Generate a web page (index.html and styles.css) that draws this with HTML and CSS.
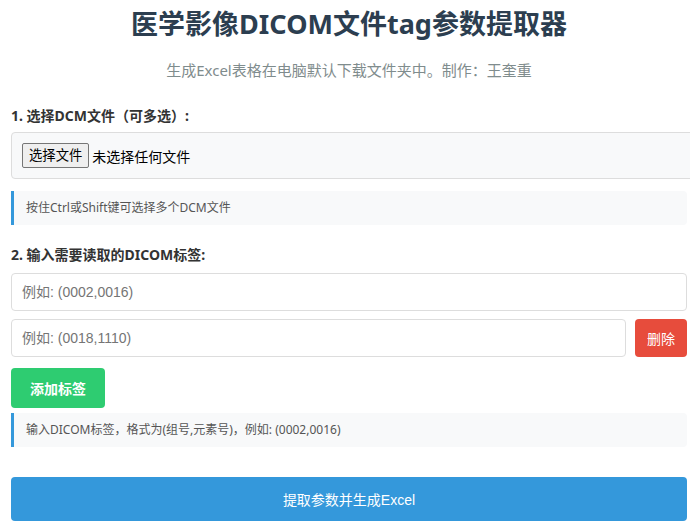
FILE: index.html
```html
<!DOCTYPE html>
<html lang="zh-CN">
  <head>
    <meta charset="utf-8">
    <title>医学影像DICOM文件tag参数提取器</title>
    <link rel="stylesheet" href="styles.css">
  </head>
  <body>
    <div class="container">
      <h1 class="title">医学影像DICOM文件tag参数提取器</h1>
      <p class="subtitle">生成Excel表格在电脑默认下载文件夹中。制作：王奎重</p>

      <div class="section first">
        <div class="label">1. 选择DCM文件（可多选）:</div>
        <label class="filebox">
          <span class="filebtn">选择文件</span>
          <span class="filename">未选择任何文件</span>
          <input type="file" multiple hidden>
        </label>
        <div class="hint">按住Ctrl或Shift键可选择多个DCM文件</div>
      </div>

      <div class="section">
        <div class="label">2. 输入需要读取的DICOM标签:</div>
        <div class="tagrow">
          <input class="taginput" placeholder="例如: (0002,0016)">
        </div>
        <div class="tagrow">
          <input class="taginput" placeholder="例如: (0018,1110)">
          <button class="delbutton">删除</button>
        </div>
        <button class="addbutton">添加标签</button>
        <div class="hint">输入DICOM标签，格式为(组号,元素号)，例如: (0002,0016)</div>
      </div>

      <button class="submitbutton">提取参数并生成Excel</button>
    </div>
  </body>
</html>
```

FILE: styles.css
```css
html {
  overflow: hidden;
}
body {
  margin: 0;
  font-family: "Noto Sans", "Noto Sans CJK SC", sans-serif;
  color: #333;
  background: #fff;
}
.container {
  width: 676px;
  margin-left: 11px;
}
.title {
  margin: 6px 0 0;
  text-align: center;
  font-size: 27px;
  font-weight: bold;
  line-height: 36px;
  color: #2c3e50;
}
.subtitle {
  margin: 18px 0 0;
  text-align: center;
  font-size: 15px;
  line-height: 20px;
  color: #7f8c8d;
}
.section {
  margin-top: 20px;
}
.section.first {
  margin-top: 26px;
}
.label {
  font-size: 14px;
  font-weight: bold;
  line-height: 20px;
  margin-bottom: 8px;
}
.first .label {
  margin-bottom: 6px;
}
.filebox {
  display: flex;
  align-items: center;
  width: 100%;
  padding: 10px;
  border: 1px solid #ddd;
  border-radius: 4px;
  background: #f8f9fa;
  font-family: "Liberation Sans", "Noto Sans CJK SC", sans-serif;
  font-size: 14px;
}
.filebtn {
  padding: 2px 6px;
  border: 1px solid #767676;
  border-radius: 2px;
  background: #efefef;
  font-size: 13.33px;
  line-height: 19px;
  color: #000;
  margin-right: 3px;
}
.filename {
  color: #000;
}
.hint {
  margin-top: 12px;
  padding: 8px 12px;
  border-left: 3px solid #3498db;
  border-radius: 0 4px 4px 0;
  background: #f8f9fa;
  font-size: 12px;
  line-height: 18px;
  color: #555;
}
.tagrow {
  display: flex;
  gap: 9px;
  margin-bottom: 8px;
}
.taginput {
  flex: 1;
  box-sizing: border-box;
  height: 38px;
  padding: 0 10px;
  border: 1px solid #ddd;
  border-radius: 4px;
  font-family: "Liberation Sans", "Noto Sans CJK SC", sans-serif;
  font-size: 14px;
}
.taginput::placeholder {
  color: #757575;
}
.delbutton {
  height: 38px;
  padding: 0 12px;
  border: none;
  border-radius: 4px;
  background: #e74c3c;
  color: #fff;
  font-family: "Liberation Sans", "Noto Sans CJK SC", sans-serif;
  font-size: 14px;
}
.addbutton {
  display: block;
  margin-top: 11px;
  height: 40px;
  padding: 0 19px;
  border: none;
  border-radius: 4px;
  background: #2ecc71;
  color: #fff;
  font-family: "Liberation Sans", "Noto Sans CJK SC", sans-serif;
  font-size: 14px;
  font-weight: bold;
}
.addbutton + .hint {
  margin-top: 5px;
}
.submitbutton {
  display: block;
  width: 100%;
  margin-top: 30px;
  height: 44px;
  border: none;
  border-radius: 4px;
  background: #3498db;
  color: #fff;
  font-family: "Liberation Sans", "Noto Sans CJK SC", sans-serif;
  font-size: 14px;
}
```
